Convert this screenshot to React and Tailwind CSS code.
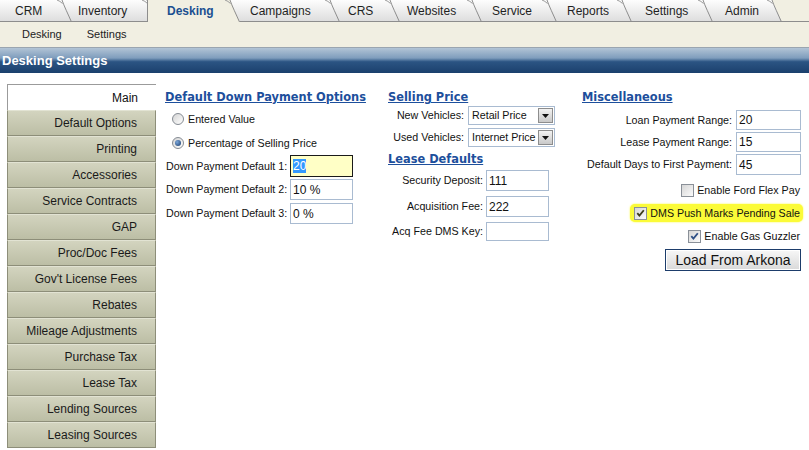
import React from "react";

const tabs = [
  { label: "CRM", w: "w-[72px]", pl: "pl-[15px]", z: "z-[20]" },
  { label: "Inventory", w: "w-[95px]", pl: "pl-[16px]", z: "z-[19]" },
  { label: "Desking", w: "w-[93px]", pl: "pl-[20px]", z: "z-[30]", active: true },
  { label: "Campaigns", w: "w-[110px]", pl: "pl-[20px]", z: "z-[17]" },
  { label: "CRS", w: "w-[70px]", pl: "pl-[18px]", z: "z-[16]" },
  { label: "Websites", w: "w-[92px]", pl: "pl-[17px]", z: "z-[15]" },
  { label: "Service", w: "w-[85px]", pl: "pl-[20px]", z: "z-[14]" },
  { label: "Reports", w: "w-[85px]", pl: "pl-[20px]", z: "z-[13]" },
  { label: "Settings", w: "w-[91px]", pl: "pl-[23px]", z: "z-[12]" },
  { label: "Admin", w: "w-[79px]", pl: "pl-[22px]", z: "z-[11]" },
];

const sideItems = [
  "Default Options",
  "Printing",
  "Accessories",
  "Service Contracts",
  "GAP",
  "Proc/Doc Fees",
  "Gov't License Fees",
  "Rebates",
  "Mileage Adjustments",
  "Purchase Tax",
  "Lease Tax",
  "Lending Sources",
  "Leasing Sources",
];

function Tab({ tab }) {
  return (
    <div
      className={`relative ${tab.w} ${tab.z} -mr-[10px] h-full flex items-center ${tab.pl}`}
    >
      {tab.active ? (
        <div className="absolute inset-0 bg-[#f1efe2] border-l border-[#8d8d8d] [clip-path:polygon(0_0,calc(100%_-_10px)_0,100%_100%,0_100%)]"></div>
      ) : (
        <div className="absolute inset-0 bg-linear-to-b from-[#fdfdfd] to-[#dedede] border-b border-[#8d8d8d] [clip-path:polygon(0_0,calc(100%_-_10px)_0,100%_100%,0_100%)]"></div>
      )}
      <svg
        className="absolute right-0 top-0 h-[22px] w-[16px] overflow-visible"
        viewBox="0 0 16 22"
      >
        <path
          d="M6 0 C8 6, 12 14, 15.5 22"
          fill="none"
          stroke="#8d8d8d"
          strokeWidth="1"
        />
        <path d="M1 0 Q4 1 6.5 3.5" fill="none" stroke="#9a9a9a" strokeWidth="1" />
      </svg>
      <span
        className={`relative text-[12px] leading-none ${
          tab.active ? "font-bold text-[#1b4f91]" : "text-[#1f1f1f]"
        }`}
      >
        {tab.label}
      </span>
    </div>
  );
}

function Radio({ checked }) {
  return (
    <span className="w-[12px] h-[12px] rounded-full border border-[#858b93] bg-linear-to-br from-[#d4d4d4] to-[#ffffff] flex items-center justify-center">
      {checked && (
        <span className="w-[6px] h-[6px] rounded-full bg-[radial-gradient(circle_at_35%_35%,#7aa6d9,#173a6b)]"></span>
      )}
    </span>
  );
}

function Check({ checked, dark }) {
  return (
    <span className="w-[13px] h-[13px] border border-[#8a9098] bg-linear-to-br from-[#d6d6d6] to-[#fbfbfb] flex items-center justify-center shrink-0">
      {checked && (
        <svg width="11" height="11" viewBox="0 0 11 11">
          <path
            d="M2.3 5.2 L4.4 7.6 L8.8 2.2"
            fill="none"
            stroke={dark ? "#3b3b1a" : "#2d4f86"}
            strokeWidth="1.8"
          />
        </svg>
      )}
    </span>
  );
}

function Box({ children, className = "" }) {
  return (
    <div
      className={`border border-[#a9bbd1] bg-white flex items-center pl-[2px] text-[12px] text-[#111] ${className}`}
    >
      {children}
    </div>
  );
}

function Select({ value }) {
  return (
    <div className="w-[87px] h-[19px] border border-[#a9bbd1] bg-white flex items-center justify-between pl-[3px] pr-px text-[10.7px] text-[#111]">
      <span className="whitespace-nowrap">{value}</span>
      <span className="w-[15px] h-[15px] border border-[#8d8d8d] bg-linear-to-b from-[#f2f2f2] to-[#c9c9c9] flex items-center justify-center shrink-0">
        <svg width="7" height="4" viewBox="0 0 7 4">
          <path d="M0 0 L7 0 L3.5 4 Z" fill="#111" />
        </svg>
      </span>
    </div>
  );
}

const heading =
  "font-['DejaVu_Sans',Verdana,sans-serif] font-bold text-[11.4px] text-[#1d4f9c] underline leading-[14px] h-[14px] whitespace-nowrap";

export default function App() {
  return (
    <div className="w-[809px] h-[450px] overflow-hidden bg-white font-['Liberation_Sans',Arial,sans-serif] text-[#111]">
      {/* top tabs */}
      <div className="flex h-[22px] bg-[#f1efe2]">
        {tabs.map((t) => (
          <Tab key={t.label} tab={t} />
        ))}
        <div className="flex-1 h-full border-b border-[#8d8d8d] bg-[#f1efe2] z-0"></div>
      </div>

      {/* sub nav */}
      <div className="h-[25px] bg-[#f1efe2] flex items-center text-[11px] text-[#222]">
        <span className="ml-[22px]">Desking</span>
        <span className="ml-[25px]">Settings</span>
      </div>

      {/* title bar */}
      <div className="h-[26px] border-t border-[#9aa5b0] bg-[linear-gradient(to_bottom,#b2c4d6_0%,#7f9dbd_40%,#2b5483_55%,#1b406d_100%)] flex items-center pl-[2px]">
        <span className="text-white font-bold text-[13px]">Desking Settings</span>
      </div>

      <div className="flex items-start mt-[11px]">
        {/* sidebar */}
        <div className="ml-[7px] w-[149px] flex flex-col">
          <div className="h-[26px] bg-white border-t border-l border-[#9b9b9b] flex items-center justify-end pr-[18px] text-[12px]">
            Main
          </div>
          {sideItems.map((s) => (
            <div
              key={s}
              className="h-[26px] bg-linear-to-b from-[#d3d4bf] to-[#bcbea5] border-t border-t-[#e2e3d3] border-b border-b-[#8d8e79] border-x border-x-[#8d8e79] flex items-center justify-end pr-[18px] text-[12px] text-[#1a1a1a] whitespace-nowrap"
            >
              {s}
            </div>
          ))}
        </div>

        {/* column 1 */}
        <div className="ml-[9px] w-[223px] flex flex-col text-[10.7px]">
          <div className={`mt-[6px] ${heading}`}>Default Down Payment Options</div>
          <div className="mt-[8px] h-[14px] flex items-center pl-[7px] gap-[4px]">
            <Radio />
            <span>Entered Value</span>
          </div>
          <div className="mt-[10px] h-[14px] flex items-center pl-[7px] gap-[4px]">
            <Radio checked />
            <span>Percentage of Selling Price</span>
          </div>
          <div className="mt-[5px] h-[22px] flex items-center pl-px">
            <span className="w-[124px] whitespace-nowrap">Down Payment Default 1:</span>
            <div className="w-[63px] h-[22px] border border-[#1a1a1a] bg-[#ffffc6] flex items-center pl-[2px] text-[12px]">
              <span className="bg-[#3399ff] text-white leading-[14px]">20</span>
            </div>
          </div>
          <div className="mt-[2px] h-[21px] flex items-center pl-px">
            <span className="w-[124px] whitespace-nowrap">Down Payment Default 2:</span>
            <Box className="w-[63px] h-[21px]">10 %</Box>
          </div>
          <div className="mt-[3px] h-[21px] flex items-center pl-px">
            <span className="w-[124px] whitespace-nowrap">Down Payment Default 3:</span>
            <Box className="w-[63px] h-[21px]">0 %</Box>
          </div>
        </div>

        {/* column 2 */}
        <div className="w-[194px] flex flex-col text-[10.7px]">
          <div className={`mt-[6px] ${heading}`}>Selling Price</div>
          <div className="mt-[2px] h-[19px] flex items-center gap-[4px]">
            <span className="w-[76px] text-right whitespace-nowrap">New Vehicles:</span>
            <Select value="Retail Price" />
          </div>
          <div className="mt-[3px] h-[19px] flex items-center gap-[4px]">
            <span className="w-[76px] text-right whitespace-nowrap">Used Vehicles:</span>
            <Select value="Internet Price" />
          </div>
          <div className={`mt-[5px] ${heading}`}>Lease Defaults</div>
          <div className="mt-[4px] h-[21px] flex items-center gap-[3px]">
            <span className="w-[95px] text-right whitespace-nowrap">Security Deposit:</span>
            <Box className="w-[63px] h-[21px]">111</Box>
          </div>
          <div className="mt-[5px] h-[21px] flex items-center gap-[3px]">
            <span className="w-[95px] text-right whitespace-nowrap">Acquisition Fee:</span>
            <Box className="w-[63px] h-[21px]">222</Box>
          </div>
          <div className="mt-[5px] h-[19px] flex items-center gap-[3px]">
            <span className="w-[95px] text-right whitespace-nowrap">Acq Fee DMS Key:</span>
            <Box className="w-[63px] h-[19px]"></Box>
          </div>
        </div>

        {/* column 3 */}
        <div className="w-[219px] flex flex-col text-[10.7px]">
          <div className={`mt-[6px] ${heading}`}>Miscellaneous</div>
          <div className="mt-[6px] h-[20px] flex items-center justify-end gap-[4px]">
            <span className="whitespace-nowrap">Loan Payment Range:</span>
            <Box className="w-[65px] h-[20px]">20</Box>
          </div>
          <div className="mt-[2px] h-[20px] flex items-center justify-end gap-[4px]">
            <span className="whitespace-nowrap">Lease Payment Range:</span>
            <Box className="w-[65px] h-[20px]">15</Box>
          </div>
          <div className="mt-[2px] h-[21px] flex items-center justify-end gap-[4px]">
            <span className="whitespace-nowrap">Default Days to First Payment:</span>
            <Box className="w-[65px] h-[21px]">45</Box>
          </div>
          <div className="mt-[8px] h-[14px] flex items-center justify-end gap-[3px] pr-px">
            <Check />
            <span className="whitespace-nowrap">Enable Ford Flex Pay</span>
          </div>
          <div className="mt-[7px] h-[18px] -mr-[4px] pr-[2px] flex items-center justify-end">
            <div className="h-[18px] pl-[4px] pr-[3px] flex items-center gap-[3px] bg-[#fbfb38] rounded-[5px] shadow-[0_0_2px_#fbfb38]">
              <Check checked dark />
              <span className="whitespace-nowrap">DMS Push Marks Pending Sale</span>
            </div>
          </div>
          <div className="mt-[7px] h-[14px] flex items-center justify-end gap-[3px] pr-px">
            <Check checked />
            <span className="whitespace-nowrap">Enable Gas Guzzler</span>
          </div>
          <button className="mt-[6px] self-end w-[136px] h-[22px] border border-[#1d3d6b] bg-linear-to-b from-[#f7f7f7] to-[#d9d9d9] text-[14px] text-[#111] leading-none shadow-[inset_0_0_0_1px_#ffffff]">
            Load From Arkona
          </button>
        </div>
      </div>
    </div>
  );
}
